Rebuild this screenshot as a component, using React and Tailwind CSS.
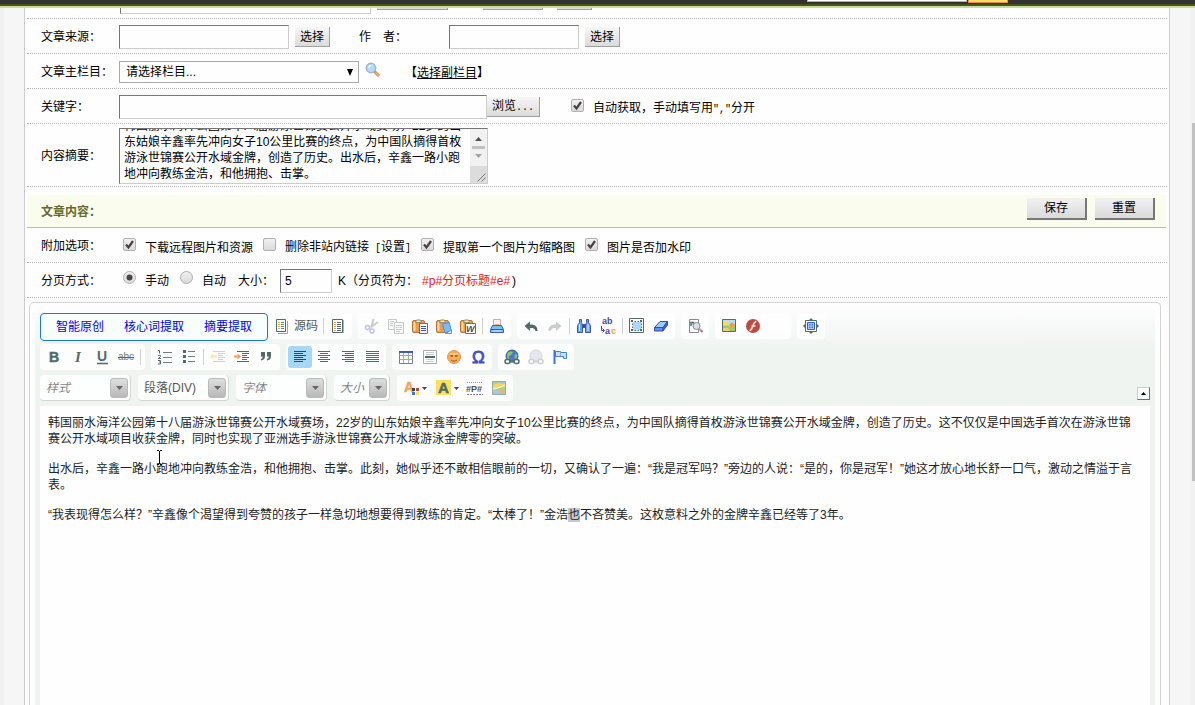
import React, { useEffect, useRef, useState } from "react";

const SUMMARY =
  "韩国丽水海洋公园第十八届游泳世锦赛公开水域赛场，22岁的山东姑娘辛鑫率先冲向女子10公里比赛的终点，为中国队摘得首枚游泳世锦赛公开水域金牌，创造了历史。出水后，辛鑫一路小跑地冲向教练金浩，和他拥抱、击掌。";

const DARK = "#4f6b6a";

// toolbar drawings, all on a 16x16 grid
const icons = {
  source: (
    <g fill="none" stroke={DARK}>
      <path d="M2.5 1.5h9v12h-9z" fill="#fff" />
      <path d="M13.5 3v12.5H4" stroke="#9aa8a6" />
      <path d="M7 4.5h3M7 6.5h3M7 8.5h3M7 10.5h3" stroke="#6d8280" />
      <path d="M4 4.5h2M4 6.5h2M4 8.5h2M4 10.5h2" stroke="#f0a860" />
    </g>
  ),
  template: (
    <g fill="none" stroke={DARK}>
      <path d="M2.5 1.5h10v13h-10z" fill="#fff" />
      <path d="M13.5 2v13" stroke="#a8b4b2" />
      <path d="M7 4.5h4M7 6.5h4M7 8.5h4M7 10.5h4M7 12.5h4" />
      <path d="M4 4.5h2M4 6.5h2M4 8.5h2M4 10.5h2M4 12.5h2" stroke="#f3a04a" />
    </g>
  ),
  cut: (
    <g fill="none" opacity=".45">
      <path d="M9.5 1L7.5 9M14 4L6.5 9.5" stroke="#8b8f92" strokeWidth="2" />
      <circle cx="3.5" cy="9.5" r="2" stroke="#7a7ad0" strokeWidth="1.5" />
      <circle cx="8" cy="13" r="2" stroke="#7a7ad0" strokeWidth="1.5" />
    </g>
  ),
  copy: (
    <g fill="#fafafa" stroke="#c3c8c6">
      <path d="M.5 1.5h8v10h-8z" />
      <path d="M2 3.5h4M2 5.5h3M2 7.5h3" />
      <path d="M6.5 4.5h9v11h-9z" />
      <path d="M8 7.5h6M8 9.5h6M8 11.5h6M8 13.5h4" />
      <path d="M9 9.5h3" stroke="#e6e0a0" />
    </g>
  ),
  paste: (
    <g>
      <Clipboard />
      <path d="M7.5 5.5h8v10h-8z" fill="#fff" stroke="#3d6fd0" />
      <path d="M9 8.5h5M9 10.5h5M9 12.5h5" stroke="#4250c4" fill="none" />
    </g>
  ),
  pasteText: (
    <g>
      <Clipboard />
      <path d="M6.5 6l7-1.5 1.5 8-6 2.5z" fill="#76bdf5" stroke="#4d93dc" />
      <path d="M9 15.5h6.500v-4" fill="none" stroke="#8a8f90" />
    </g>
  ),
  pasteWord: (
    <g>
      <Clipboard />
      <path d="M5.5 5.5h10v10h-10z" fill="#fff" stroke="#3d6fd0" />
      <text x="6" y="14" fill="#4a5252" className="text-[9px] font-bold italic">
        W
      </text>
    </g>
  ),
  print: (
    <g>
      <path d="M4.5 8V1.5h7V8z" fill="#f7f2ee" stroke="#bdb0ae" />
      <path d="M5 8l1-2h4l1 2z" fill="#f1b07a" />
      <path d="M1.5 11.5l2-4h9l2 4v3h-13z" fill="#7dbbf4" stroke="#2f62b8" />
      <path d="M2 11.5h12" stroke="#3560b0" />
      <path d="M4 13h8" stroke="#d9ecff" />
    </g>
  ),
  undo: <path d="M1.5 8L7 3.5v3c5 0 7.5 1.5 7.5 6.5h-2c-1-2.5-2-3-5.5-3v3z" fill={DARK} />,
  redo: <path d="M14.5 8L9 3.5v3c-5 0-7.5 1.5-7.5 6.5h2c1-2.5 2-3 5.5-3v3z" fill="#c8cecd" />,
  find: (
    <g stroke="#444fb0">
      <path d="M3.5 1.5h2v3l1 3v7h-5v-7l2-3zM10.5 1.5h2v3l2 3v7h-5v-7l1-3z" fill="#62a8ee" />
      <path d="M6.5 6.5h3v3h-3z" fill="#3c46a0" />
      <path d="M3.5 6v7M12 6v7" stroke="#eef6ff" />
    </g>
  ),
  replace: (
    <g fill="#4649a4" className="text-[9px] font-bold">
      <text x="2" y="6">
        ab
      </text>
      <text x="5" y="16">
        a
      </text>
      <text x="11" y="16" fill="#f2a04c">
        c
      </text>
      <path d="M1.5 8v4.500H4M2.5 10.5l2 2-2 2" fill="none" stroke="#4649a4" />
    </g>
  ),
  selectAll: (
    <g>
      <path d="M.5.5h14v14H.5z" fill="#fff" stroke={DARK} />
      <path d="M4 4h8v8H4z" fill="#a8d8fa" />
      <path d="M2 2h2v2H2zM11 2h2v2h-2zM2 11h2v2H2zM11 11h2v2h-2z" fill={DARK} />
      <path
        d="M3.5 5.5V7M3.5 8.5V10M12.5 5.5V7M12.5 8.5V10M5.5 3.5H7M8.5 3.5H10M5.5 12.5H7M8.5 12.5H10"
        stroke={DARK}
      />
    </g>
  ),
  eraser: (
    <g stroke="#344cba">
      <path d="M1.5 9.5L7 3.5h7.5l-4.5 6z" fill="#9ccdf8" />
      <path d="M1.5 9.5H10V13H1.500z" fill="#5a94e6" />
      <path d="M10 9.5l4.5-6V7L10 13z" fill="#3b6bd0" />
    </g>
  ),
  preview: (
    <g>
      <path d="M2.5 1.5h9v13h-9z" fill="#fbfbfb" stroke="#8b8794" />
      <path d="M4 8V4.5h2.5V7" fill="none" stroke={DARK} strokeWidth="1.5" />
      <circle cx="9.5" cy="8" r="3.5" fill="#dcdfe6" stroke="#8b8f93" />
      <path d="M12 10.5l3 3" stroke="#b0a4a2" strokeWidth="2" />
      <path d="M14 12.5l1.500 1.500" stroke="#d5703c" strokeWidth="2" />
    </g>
  ),
  image: (
    <g>
      <path d="M1.5 1.5h13v12h-13z" fill="#b4defa" stroke={DARK} />
      <path d="M2 8l4-1 3 2 5-1v5H2z" fill="#9fc96a" />
      <circle cx="5" cy="5" r="2.500" fill="#fbdc55" />
      <path d="M8 7l3-3 3 3-1 2H9z" fill="#f09a4a" />
      <path d="M2 10h5l2 3H2z" fill="#e8cf7a" />
    </g>
  ),
  flash: (
    <g>
      <circle cx="8" cy="8" r="7" fill="#bd4a42" />
      <path d="M11.5 3.5c-4 0-3.5 9-7 9M6.5 8h4" stroke="#f6e4e0" strokeWidth="1.7" fill="none" />
    </g>
  ),
  maximize: (
    <g>
      <path d="M2.5 2.5h11v11h-11z" fill="#fff" stroke={DARK} />
      <path d="M4.5 4.5h7v7h-7z" fill="#9fcdfa" stroke="#2a62cc" />
      <path d="M6 6h1.5v1.5H6zM8.5 6H10v1.5H8.500zM6 8.5h1.5V10H6zM8.5 8.5H10V10H8.500z" fill="#3b7be0" />
      <path d="M8 0l2 2H6zM8 16l2-2H6zM0 8l2-2v4zM16 8l-2-2v4z" fill={DARK} />
    </g>
  ),
  bold: (
    <text x="3" y="13" fill={DARK} stroke={DARK} strokeWidth=".5" className="text-[14px] font-bold">
      B
    </text>
  ),
  italic: (
    <text x="5" y="13" fill={DARK} className="font-['Liberation_Serif',serif] text-[15px] font-bold italic">
      I
    </text>
  ),
  underline: (
    <g>
      <text x="3" y="12" fill={DARK} className="text-[14px] font-bold">
        U
      </text>
      <path d="M3 14.5h11" stroke={DARK} strokeWidth="1.5" />
    </g>
  ),
  strike: (
    <g>
      <text x="0" y="11" fill="#70807f" className="text-[10px]">
        abc
      </text>
      <path d="M0 8.5h16" stroke={DARK} />
    </g>
  ),
  ordered: (
    <g stroke="#70807f" fill="none">
      <path d="M6 3.5h9M6 8.5h9M6 13.5h9" />
      <path d="M1 1.5h1.5v3M1 6.5h2.5v1l-2 2H4M1 11.5h2.5V13H2M3.5 13v2H1" stroke={DARK} />
    </g>
  ),
  unordered: (
    <g>
      <path d="M2 1h3v3H2zM2 6h3v3H2zM2 11h3v3H2z" fill={DARK} />
      <path d="M7 2.5h7M7 7.5h7M7 12.5h7" stroke="#70807f" />
    </g>
  ),
  outdent: (
    <g stroke="#cfd4d2">
      <path d="M3 2.5h12M8 4.5h7M8 6.5h5M8 8.5h7M8 10.5h5M3 12.5h12" />
      <path d="M0 7.5l3.500-3v2H7v2H3.500v2z" fill="#f3ecae" stroke="none" />
    </g>
  ),
  indent: (
    <g stroke={DARK}>
      <path d="M3 2.5h12M8 4.5h7M8 6.5h5M8 8.5h7M8 10.5h5M3 12.5h12" />
      <path d="M7 7.5l-3.500-3v2H0v2h3.500v2z" fill="#f4a356" stroke="none" />
    </g>
  ),
  quote: (
    <path
      d="M3 3h4v4c0 3-1.5 4-4 4.5V10c1.2-.4 1.7-1 1.7-2.5H3zM9 3h4v4c0 3-1.5 4-4 4.5V10c1.2-.4 1.7-1 1.7-2.5H9z"
      fill={DARK}
    />
  ),
  left: <path d="M2 2.5h12M2 4.5h9M2 6.5h12M2 8.5h9M2 10.5h12M2 12.5h9" stroke="#2f4a4c" />,
  center: <path d="M2 2.5h12M4 4.5h8M2 6.5h12M4 8.5h8M2 10.5h12M4 12.5h8" stroke={DARK} />,
  right: <path d="M2 2.5h12M5 4.5h9M2 6.5h12M5 8.5h9M2 10.5h12M5 12.5h9" stroke={DARK} />,
  justify: <path d="M2 2.5h13M2 4.5h13M2 6.5h13M2 8.5h13M2 10.5h13M2 12.5h13" stroke={DARK} />,
  table: (
    <g fill="none" stroke="#74807f">
      <path d="M1.5 2.5h13v12h-13z" fill="#fff" />
      <path d="M1.5 6.5h13M1.5 10.5h13M5.5 4v10M10.5 4v10" stroke="#a3acab" />
      <path d="M1 3h14" stroke="#4059c0" strokeWidth="2" />
    </g>
  ),
  rule: (
    <g>
      <path d="M1.5 1.5h13v13h-13z" fill="#fff" stroke="#a4abaa" />
      <path d="M4 3.5h8M4 5.5h8M4 10.5h8M4 12.5h8" stroke="#c8cccb" />
      <path d="M3 8h10" stroke={DARK} strokeWidth="2" />
    </g>
  ),
  smiley: (
    <g>
      <circle cx="8" cy="8" r="6.5" fill="#f7ac55" stroke="#e9994a" />
      <path d="M3.5 5h9" stroke="#fbd9a0" />
      <path d="M4 6h3v2H5zM9 6h3l-1 2H9z" fill="#a8673a" />
      <path d="M5 11c1.5 1.5 4.5 1.5 6 0" stroke="#a5552b" fill="none" />
    </g>
  ),
  omega: (
    <text x="2" y="14" fill="#3f51b8" stroke="#3f51b8" strokeWidth=".8" className="text-[17px]">
      Ω
    </text>
  ),
  link: (
    <g>
      <circle cx="8" cy="7" r="6" fill="#4a78cc" stroke="#39549e" />
      <path d="M3 5c2-3 5-3 6-2l-2 3-2 1v3H3.500zM11 5l2.5 1-1 4-2-1z" fill="#8cc665" />
      <ChainBase color={DARK} />
    </g>
  ),
  unlink: (
    <g opacity=".7">
      <circle cx="8" cy="7" r="6" fill="#dcdde9" stroke="#c5c7d6" />
      <ChainBase color="#b9bdc0" />
    </g>
  ),
  anchor: (
    <g>
      <path d="M2.5 1v14" stroke="#3774d4" strokeWidth="2" />
      <path d="M3.5 2.5h5v1h6v6h-3v-2h-8z" fill="#d4d9df" stroke="#3f84dc" />
      <path d="M8.5 4v3" stroke="#9db4c8" />
    </g>
  ),
  color: (
    <g>
      <text x="0" y="12" fill="#f2a35a" stroke="#f2a35a" strokeWidth=".5" className="text-[14px] font-bold">
        A
      </text>
      <path d="M8 8h3v3H8z" fill="#444" />
      <path d="M12 8h3v3h-3z" fill="#c0433c" />
      <path d="M8 12h3v3H8z" fill="#3d76d8" />
      <path d="M12 12h3v3h-3z" fill="#fbdd52" />
    </g>
  ),
  bgColor: (
    <g>
      <path d="M0 0h15v15H0z" fill="#fbe25e" />
      <text x="2" y="13" fill={DARK} stroke={DARK} strokeWidth=".5" className="text-[15px] font-bold">
        A
      </text>
    </g>
  ),
  pageBreak: (
    <g fill="#4a5050" className="text-[9px] font-bold">
      <path d="M0 2.5h16" stroke="#999" strokeDasharray="1 1" />
      <path d="M0 14.5h16" stroke="#8c6f9a" strokeDasharray="2 1" />
      <text x="-1" y="12">
        #P#
      </text>
    </g>
  ),
  map: (
    <g>
      <path d="M1.5 1.5h13v13h-13z" fill="#a8d09a" stroke="#9aaca8" />
      <path d="M2 5l6-2 6 1v3l-6 1-6 2z" fill="#f7d867" />
      <path d="M2 11l5-1 3 1v3H2zM9 2h5v2H9z" fill="#9fcdea" />
      <path d="M2 9l5-1 7-3" stroke="#fff8d0" fill="none" />
      <path d="M9 10h4v3H9z" fill="#efb75a" />
    </g>
  ),
};

function Clipboard() {
  return (
    <g>
      <rect x=".5" y="2.5" width="12" height="12" rx="1.5" fill="#ee9c48" stroke="#b9763a" />
      <path d="M2.5 4v9" stroke="#fbd79c" strokeWidth="2" />
      <path d="M3.5 4.5l1-2.5h4l1 2.5z" fill="#f3ead8" stroke="#a08a6c" />
    </g>
  );
}

function ChainBase({ color }) {
  return (
    <g fill="#fff" stroke={color} strokeWidth="1.5">
      <rect x="1" y="10.5" width="5" height="4" rx="2" />
      <rect x="10" y="10.5" width="5" height="4" rx="2" />
      <path d="M5 12.5h6" />
    </g>
  );
}

function Icon({ name }) {
  return (
    <svg width="16" height="16" viewBox="0 0 16 16" className="shrink-0 overflow-visible" aria-hidden="true">
      {icons[name]}
    </svg>
  );
}

function Tool({ name, active, arrow }) {
  return (
    <button
      type="button"
      aria-label={name}
      className={`flex h-[22px] items-center justify-center rounded-[3px] ${arrow ? "w-8 gap-0.5" : "w-6"} ${
        active ? "bg-[#a5d7fb]" : ""
      }`}
    >
      <Icon name={name} />
      {arrow && (
        <svg width="5" height="3" viewBox="0 0 5 3">
          <path d="M0 0h5L2.5 3z" fill="#444" />
        </svg>
      )}
    </button>
  );
}

function Sep() {
  return <span className="mx-0.5 h-4 w-px bg-[#cdd2d0]" />;
}

function Group({ children, tools = [], className = "" }) {
  return (
    <div className={`flex h-[26px] items-center rounded bg-white/80 px-0.5 ${className}`}>
      {children}
      {tools.map((t, i) => (t === "|" ? <Sep key={i} /> : <Tool key={t} name={t} active={t === "left"} />))}
    </div>
  );
}

function Combo({ text, italic, small }) {
  return (
    <div
      className={`relative flex h-[26px] items-center rounded border border-t-0 border-l-0 border-[#d2d6d4] bg-white/90 ${
        small ? "w-14" : "w-[91px]"
      }`}
    >
      <select
        aria-label={text}
        className={`h-full w-full appearance-none bg-transparent pl-1.5 text-[12px] outline-none ${
          italic ? "text-[#858585] italic" : "text-[#555]"
        }`}
      >
        <option>{text}</option>
      </select>
      <span className="pointer-events-none absolute right-0.5 flex h-5 w-[18px] items-center justify-center rounded-[3px] border border-[#b9b9b9] bg-linear-to-b from-[#dedede] to-[#b9b9b9]">
        <svg width="7" height="4" viewBox="0 0 7 4">
          <path d="M0 0h7L3.5 4z" fill="#666" />
        </svg>
      </span>
    </div>
  );
}

function Row({ label, htmlFor, children, className = "min-h-[35px]" }) {
  return (
    <div className={`flex items-center border-b border-dotted border-[#b4b4b4] pt-0.5 pl-[14px] ${className}`}>
      <label htmlFor={htmlFor} className="w-[78px] shrink-0">
        {label}
      </label>
      {children}
    </div>
  );
}

const inputClass =
  "h-6 shrink-0 border border-t-[#767676] border-l-[#767676] border-r-[#cccccc] border-b-[#cccccc] bg-[#fefefe] px-1 text-[12px] outline-none";

function GrayButton({ children, className, label }) {
  return (
    <button
      type="button"
      aria-label={label}
      className={`h-5 shrink-0 border-r border-b border-[#a0a0a0] bg-linear-to-b from-[#f7f7f7] to-[#dbdbdb] text-center leading-4 ${className}`}
    >
      {children}
    </button>
  );
}

// latin characters set as wide as half a hanzi
function Half({ children }) {
  return <span className="font-['Liberation_Mono',monospace] text-[10px] whitespace-pre">{children}</span>;
}

function Check({ type = "checkbox", name, defaultChecked, children }) {
  const round = type === "radio";
  return (
    <label className="flex shrink-0 items-center gap-[9px] pt-1">
      <span className="relative mb-2 flex h-[13px] w-[13px]">
        <input
          type={type}
          name={name}
          defaultChecked={defaultChecked}
          className={`peer h-[13px] w-[13px] appearance-none border border-[#b0b0b0] bg-linear-to-b from-[#f0f0f0] to-[#dadada] ${
            round ? "rounded-full" : "rounded-[2px]"
          }`}
        />
        <svg viewBox="0 0 13 13" className="pointer-events-none absolute inset-0 hidden peer-checked:block">
          {round ? (
            <circle cx="6.5" cy="6.5" r="3" fill="#4a4446" />
          ) : (
            <path d="M3 6.5l2.5 3L10 3" fill="none" stroke="#4a4042" strokeWidth="2.2" />
          )}
        </svg>
      </span>
      <span>{children}</span>
    </label>
  );
}

function SummaryBox() {
  const ref = useRef(null);
  const [value, setValue] = useState(SUMMARY);

  useEffect(() => {
    ref.current.scrollTop = ref.current.scrollHeight;
  }, []);

  return (
    <div className="flex h-14 w-[369px] border border-t-[#767676] border-l-[#767676] border-r-[#cccccc] border-b-[#cccccc]">
      <textarea
        id="summary"
        ref={ref}
        value={value}
        onChange={(e) => setValue(e.target.value)}
        className="min-w-0 flex-1 resize-none bg-[#fefefe] px-1 pt-0.5 pb-px text-[12px] leading-4 outline-none [scrollbar-width:none]"
      />
      <div className="flex w-[17px] flex-col bg-[#f1f1f1]">
        <div className="flex flex-1 flex-col items-center justify-between py-2">
          <svg width="7" height="4" viewBox="0 0 7 4">
            <path d="M0 4h7L3.5 0z" fill="#505050" />
          </svg>
          <span className="h-[3px] w-[13px] bg-[#c1c1c1]" />
          <svg width="7" height="4" viewBox="0 0 7 4">
            <path d="M0 0h7L3.5 4z" fill="#a3a3a3" />
          </svg>
        </div>
        <svg width="17" height="17" viewBox="0 0 17 17" className="bg-[#dcdcdc]">
          <path d="M7.5 15.5l8-8M11.5 15.5l4-4" stroke="#777" />
        </svg>
      </div>
    </div>
  );
}

function Editor() {
  return (
    <div className="mt-1 mr-1.5 ml-0.5 flex flex-1 flex-col rounded-t-[5px] border border-b-0 border-[#d3d3d3] p-[5px] pb-0">
      <div className="flex flex-1 flex-col bg-[linear-gradient(#fdfdfd,#eff4f1_40px)] px-[5px] pt-[5px]">
        <div className="flex h-[31px] items-start gap-1.5">
          <div className="flex items-start gap-0.5">
            <div className="flex h-7 items-center gap-5 rounded border border-[#1c78dc] bg-[#f8fdff] px-[15px] text-[#0000f0]">
              <button type="button">智能原创</button>
              <button type="button">核心词提取</button>
              <button type="button">摘要提取</button>
            </div>
            <Group tools={["|", "template"]}>
              <button type="button" className="flex h-[22px] items-center gap-1 pr-[3px] pl-0.5 text-[#555]">
                <Icon name="source" />
                源码
              </button>
            </Group>
          </div>
          <Group tools={["cut", "copy", "paste", "pasteText", "pasteWord", "|", "print"]} />
          <Group tools={["undo", "redo", "|", "find", "replace", "|", "selectAll", "eraser"]} />
          <Group tools={["preview"]} />
          <Group tools={["image", "flash"]} className="w-[76px]" />
          <Group tools={["maximize"]} />
        </div>
        <div className="flex h-[31px] items-start gap-1.5">
          <Group tools={["bold", "italic", "underline", "strike", "|"]} />
          <Group tools={["ordered", "unordered", "|", "outdent", "indent", "quote"]} />
          <Group tools={["left", "center", "right", "justify"]} />
          <Group tools={["table", "rule", "smiley", "omega"]} />
          <Group tools={["link", "unlink", "anchor"]} />
        </div>
        <div className="flex h-[31px] items-start gap-[7px]">
          <Combo text="样式" italic />
          <Combo text="段落(DIV)" />
          <Combo text="字体" italic />
          <Combo text="大小" italic small />
          <Group>
            <Tool name="color" arrow />
            <Tool name="bgColor" arrow />
            <Tool name="pageBreak" />
            <Tool name="map" />
          </Group>
          <button
            type="button"
            aria-label="collapse"
            className="mt-3 ml-auto flex h-[13px] w-[13px] items-center justify-center border border-t-[#c8d0cc] border-l-[#c8d0cc] border-r-[#5f7575] border-b-[#5f7575] bg-white"
          >
            <svg width="5" height="3" viewBox="0 0 5 3">
              <path d="M0 3h5L2.5 0z" fill="#000" />
            </svg>
          </button>
        </div>

        <div className="relative flex flex-1 flex-col gap-[14px] bg-[#fefefe] px-2 pt-[9px] leading-4 text-[#222]">
          <p>
            韩国丽水海洋公园第十八届游泳世锦赛公开水域赛场，22岁的山东姑娘辛鑫率先冲向女子10公里比赛的终点，为中国队摘得首枚游泳世锦赛公开水域金牌，创造了历史。这不仅仅是中国选手首次在游泳世锦赛公开水域项目收获金牌，同时也实现了亚洲选手游泳世锦赛公开水域游泳金牌零的突破。
          </p>
          <p>
            出水后，辛鑫一路小跑地冲向教练金浩，和他拥抱、击掌。此刻，她似乎还不敢相信眼前的一切，又确认了一遍：“我是冠军吗？”旁边的人说：“是的，你是冠军！”她这才放心地长舒一口气，激动之情溢于言表。
          </p>
          <p>
            “我表现得怎么样？”辛鑫像个渴望得到夸赞的孩子一样急切地想要得到教练的肯定。“太棒了！”金浩
            <span className="bg-[#c8c8d0]">也</span>
            不吝赞美。这枚意料之外的金牌辛鑫已经等了3年。
          </p>
          {/* text cursor */}
          <svg width="7" height="15" viewBox="0 0 7 15" className="absolute top-11 left-[116px]" aria-hidden="true">
            <path d="M1 .5h2M4 .5h2M3.5 1v13M1 14.5h2M4 14.5h2" stroke="#000" />
          </svg>
        </div>
      </div>
    </div>
  );
}

export default function App() {
  return (
    <div className="flex h-screen overflow-hidden bg-[#f6f6f6] font-['Liberation_Sans','Noto_Sans_CJK_SC',sans-serif] text-[12px] leading-4 text-black">
      <header className="fixed inset-x-0 top-0 z-10 flex h-2 items-start justify-end overflow-hidden border-b-2 border-[#c5dc9a] bg-[linear-gradient(#353132_4px,#45561d_4px)] pr-[187px]">
        <input aria-label="搜索" className="-mt-5 h-[22px] w-40 border border-[#aab] bg-white" />
        <button
          type="button"
          aria-label="搜索"
          className="-mt-5 ml-px h-[23px] w-10 border border-[#e8923a] bg-[#fbdc6a]"
        />
      </header>

      <div className="w-1 shrink-0 bg-[#f1f1f1]" />

      <main className="mr-5 ml-5 -mt-4 flex min-w-0 flex-1 flex-col border-x border-[#cccccc] bg-[#fefefe]">
        <form className="flex flex-1 flex-col px-0.5" onSubmit={(e) => e.preventDefault()}>
          <Row htmlFor="title">
            <input id="title" className={`${inputClass} ml-px w-[251px]`} />
            <GrayButton label="颜色" className="mb-1 ml-1.5 w-[71px]" />
            <GrayButton label="检测" className="mb-1 ml-[35px] w-[60px]" />
            <GrayButton label="选择" className="mb-1 ml-[14px] w-[35px]" />
          </Row>
          <Row label="文章来源：" htmlFor="from">
            <input id="from" className={`${inputClass} w-[170px]`} />
            <GrayButton className="ml-1.5 w-[35px]">选择</GrayButton>
            <label htmlFor="author" className="ml-[29px] w-[90px]">
              作　者：
            </label>
            <input id="author" className={`${inputClass} w-[130px]`} />
            <GrayButton className="ml-1.5 w-[35px]">选择</GrayButton>
          </Row>
          <Row label="文章主栏目：" htmlFor="column">
            <div className="relative flex w-60 items-center">
              <select
                id="column"
                className="h-[22px] w-full appearance-none border border-[#a9a9a9] bg-[#fefefe] pl-1.5 text-[12px] outline-none"
              >
                <option>请选择栏目...</option>
              </select>
              <svg width="6" height="7" viewBox="0 0 6 7" className="pointer-events-none absolute right-1.5">
                <path d="M0 0h6L3 7z" fill="#000" />
              </svg>
            </div>
            <button type="button" aria-label="搜索栏目" className="mb-1 ml-1.5">
              <svg width="16" height="16" viewBox="0 0 16 16">
                <path d="M9 9l5 5" stroke="#c98a4a" strokeWidth="3" />
                <path d="M10.5 10.5l3.5 3.5" stroke="#f5b46a" strokeWidth="1.5" />
                <circle cx="6" cy="6" r="4.7" fill="#aedcfa" stroke="#9db4cc" strokeWidth="1.5" />
                <path d="M3.5 5.5c.5-1.5 1.5-2 3-2" stroke="#fff" strokeWidth="1.5" fill="none" />
              </svg>
            </button>
            <span className="ml-6 pt-0.5">
              【
              <a href="#" className="underline">
                选择副栏目
              </a>
              】
            </span>
          </Row>
          <Row label="关键字：" htmlFor="keywords">
            <input id="keywords" className={`${inputClass} w-[368px]`} />
            <GrayButton className="mr-[31px] w-[53px]">
              浏览<Half>...</Half>
            </GrayButton>
            <Check defaultChecked>
              自动获取，手动填写用<Half>","</Half>分开
            </Check>
          </Row>
          <Row label="内容摘要：" htmlFor="summary" className="min-h-[63px]">
            <SummaryBox />
          </Row>

          <div className="mt-2 mr-px flex h-[33px] items-center border-b border-[#b8b8b8] bg-[#fafcee] pr-[11px] pl-[14px]">
            <h2 className="flex-1 pt-0.5 font-bold text-[#666a2c]">文章内容：</h2>
            <div className="mb-1 flex gap-2">
              {["保存", "重置"].map((text) => (
                <button
                  key={text}
                  type="submit"
                  className="h-[22px] w-[60px] border-r-2 border-b-2 border-[#777] bg-linear-to-b from-[#f2f2f2] to-[#dadada] leading-4"
                >
                  {text}
                </button>
              ))}
            </div>
          </div>

          <Row label="附加选项：">
            <div className="ml-1 flex items-center gap-2.5">
              <Check defaultChecked>下载远程图片和资源</Check>
              <Check>
                删除非站内链接<Half> [</Half>设置<Half>]</Half>
              </Check>
              <Check defaultChecked>提取第一个图片为缩略图</Check>
              <Check defaultChecked>图片是否加水印</Check>
            </div>
          </Row>
          <Row label="分页方式：">
            <div className="mb-1 ml-1 flex items-center gap-[11px]">
              <Check type="radio" name="paging" defaultChecked>
                手动
              </Check>
              <Check type="radio" name="paging">
                自动
              </Check>
            </div>
            <label htmlFor="size" className="ml-3">
              大小：
            </label>
            <input id="size" defaultValue="5" className={`${inputClass} mx-1.5 w-[52px]`} />
            K（分页符为：
            <span className="ml-1 text-[#e61c10]">#p#分页标题#e#</span>
            <span className="ml-0.5">)</span>
          </Row>

          <Editor />
        </form>
      </main>

      {/* page scrollbar */}
      <div className="w-[5px] shrink-0 bg-[#f1f1f1] pt-[123px] pl-0.5">
        <div className="h-[358px] bg-[#c1c1c1]" />
      </div>
    </div>
  );
}
